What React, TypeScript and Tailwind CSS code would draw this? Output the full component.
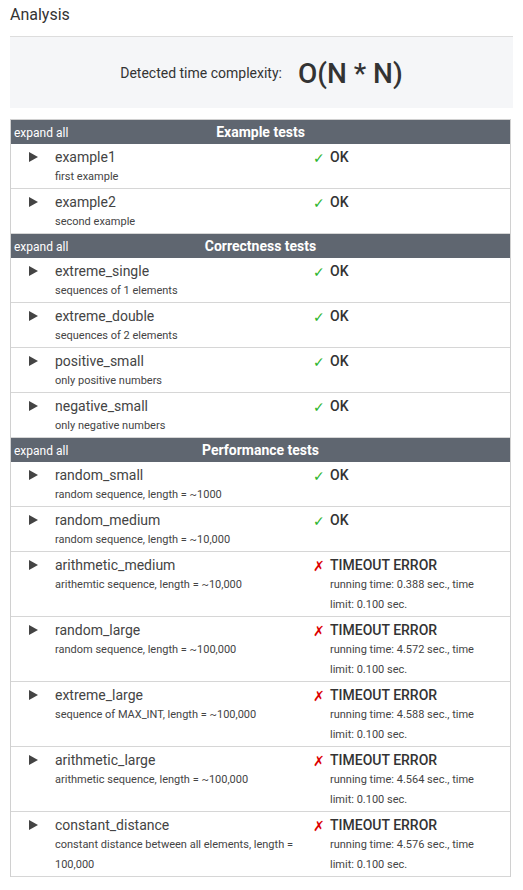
import React from "react";

type Test = {
  name: string;
  desc: string;
  ok: boolean;
  time?: string;
};

type Section = { title: string; tests: Test[] };

const sections: Section[] = [
  {
    title: "Example tests",
    tests: [
      { name: "example1", desc: "first example", ok: true },
      { name: "example2", desc: "second example", ok: true },
    ],
  },
  {
    title: "Correctness tests",
    tests: [
      { name: "extreme_single", desc: "sequences of 1 elements", ok: true },
      { name: "extreme_double", desc: "sequences of 2 elements", ok: true },
      { name: "positive_small", desc: "only positive numbers", ok: true },
      { name: "negative_small", desc: "only negative numbers", ok: true },
    ],
  },
  {
    title: "Performance tests",
    tests: [
      { name: "random_small", desc: "random sequence, length = ~1000", ok: true },
      { name: "random_medium", desc: "random sequence, length = ~10,000", ok: true },
      { name: "arithmetic_medium", desc: "arithemtic sequence, length = ~10,000", ok: false, time: "0.388" },
      { name: "random_large", desc: "random sequence, length = ~100,000", ok: false, time: "4.572" },
      { name: "extreme_large", desc: "sequence of MAX_INT, length = ~100,000", ok: false, time: "4.588" },
      { name: "arithmetic_large", desc: "arithmetic sequence, length = ~100,000", ok: false, time: "4.564" },
      {
        name: "constant_distance",
        desc: "constant distance between all elements, length = 100,000",
        ok: false,
        time: "4.576",
      },
    ],
  },
];

function Row({ t }: { t: Test }) {
  return (
    <div className="flex border-b border-[#d6d6d6] pt-[3px] pb-[1px] text-[#444]">
      <div className="w-[44px] shrink-0 flex justify-end pr-[17px] pt-[5px]">
        <svg width="9" height="10" viewBox="0 0 9 10">
          <path d="M0 0 L9 5 L0 10 Z" fill="#444" />
        </svg>
      </div>
      <div className="w-[256px] shrink-0">
        <div className="text-[14px] leading-[20px]">{t.name}</div>
        <div className="text-[11px] leading-[20px] pr-[6px]">{t.desc}</div>
      </div>
      <div className="w-[19px] shrink-0 leading-[20px] pl-[2px] pt-[1px]">
        {t.ok ? (
          <span className="text-[14px] text-[#2db52d] font-['DejaVu_Sans',sans-serif]">✓</span>
        ) : (
          <span className="text-[14px] text-[#dd0000] font-['DejaVu_Sans',sans-serif]">✗</span>
        )}
      </div>
      <div className="flex-1 pr-[20px]">
        <div className="text-[14px] leading-[20px] font-medium text-[#333]">
          {t.ok ? "OK" : "TIMEOUT ERROR"}
        </div>
        {!t.ok && (
          <div className="text-[11px] leading-[20px]">
            running time: {t.time} sec., time limit: 0.100 sec.
          </div>
        )}
      </div>
    </div>
  );
}

export default function App() {
  return (
    <div className="w-[523px] min-h-[890px] bg-white font-['Roboto',sans-serif] text-[#333]">
      <div className="px-[10px]">
        <div className="h-[36px] pt-[4px] text-[16px] leading-[22px] text-[#333]">Analysis</div>
        <div className="border-t border-[#dddddd] bg-[#f5f6f8] h-[72px] flex items-center justify-center gap-[16px]">
          <span className="text-[14px] text-[#333] pt-[1px]">Detected time complexity:</span>
          <span className="text-[28px] leading-[34px] font-medium text-[#333] pt-[2px]">O(N * N)</span>
        </div>
        <div className="mt-[11px] border border-b-0 border-[#d0d0d0] w-[501px]">
          {sections.map((s) => (
            <div key={s.title}>
              <div className="relative h-[24px] bg-[#5f6670] text-white flex items-center justify-center">
                <span className="absolute left-[3px] top-[5px] text-[12px] leading-[16px]">expand all</span>
                <span className="text-[14px] font-bold leading-[18px] -mt-[1px]">{s.title}</span>
              </div>
              {s.tests.map((t) => (
                <Row key={t.name} t={t} />
              ))}
            </div>
          ))}
        </div>
      </div>
    </div>
  );
}
